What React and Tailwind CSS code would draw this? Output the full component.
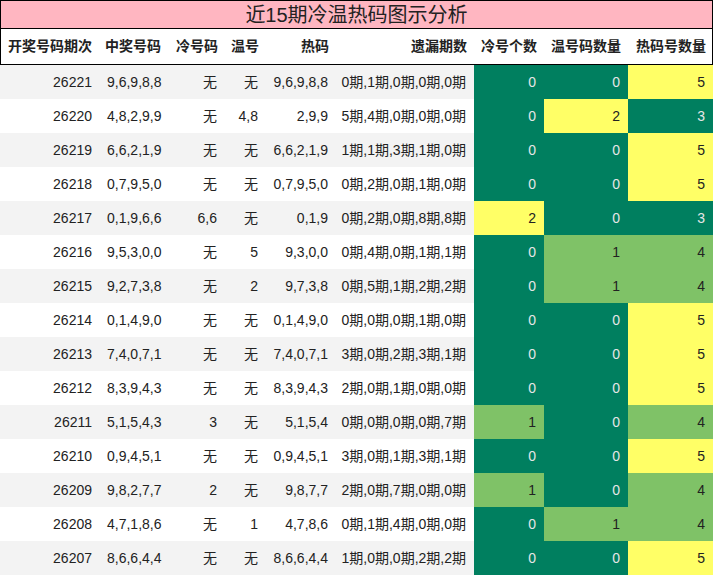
const rows = [
  ["26221", "9,6,9,8,8", "无", "无", "9,6,9,8,8", "0期,1期,0期,0期,0期", 0, 0, 5],
  ["26220", "4,8,2,9,9", "无", "4,8", "2,9,9", "5期,4期,0期,0期,0期", 0, 2, 3],
  ["26219", "6,6,2,1,9", "无", "无", "6,6,2,1,9", "1期,1期,3期,1期,0期", 0, 0, 5],
  ["26218", "0,7,9,5,0", "无", "无", "0,7,9,5,0", "0期,2期,0期,1期,0期", 0, 0, 5],
  ["26217", "0,1,9,6,6", "6,6", "无", "0,1,9", "0期,2期,0期,8期,8期", 2, 0, 3],
  ["26216", "9,5,3,0,0", "无", "5", "9,3,0,0", "0期,4期,0期,1期,1期", 0, 1, 4],
  ["26215", "9,2,7,3,8", "无", "2", "9,7,3,8", "0期,5期,1期,2期,2期", 0, 1, 4],
  ["26214", "0,1,4,9,0", "无", "无", "0,1,4,9,0", "0期,0期,0期,1期,0期", 0, 0, 5],
  ["26213", "7,4,0,7,1", "无", "无", "7,4,0,7,1", "3期,0期,2期,3期,1期", 0, 0, 5],
  ["26212", "8,3,9,4,3", "无", "无", "8,3,9,4,3", "2期,0期,1期,0期,0期", 0, 0, 5],
  ["26211", "5,1,5,4,3", "3", "无", "5,1,5,4", "0期,0期,0期,0期,7期", 1, 0, 4],
  ["26210", "0,9,4,5,1", "无", "无", "0,9,4,5,1", "3期,0期,1期,3期,1期", 0, 0, 5],
  ["26209", "9,8,2,7,7", "2", "无", "9,8,7,7", "2期,0期,7期,0期,0期", 1, 0, 4],
  ["26208", "4,7,1,8,6", "无", "1", "4,7,8,6", "0期,1期,4期,0期,0期", 0, 1, 4],
  ["26207", "8,6,6,4,4", "无", "无", "8,6,6,4,4", "1期,0期,0期,2期,2期", 0, 0, 5],
];

const headers = ["开奖号码期次", "中奖号码", "冷号码", "温号", "热码", "遗漏期数", "冷号个数", "温号码数量", "热码号数量"];

const cols = "grid grid-cols-[100px_68px_57px_41px_70px_138px_70px_84px_85px]";

// level: 0 dark green, 1 light green, 2 yellow
const tone = [
  "bg-[#007f5f] text-[#e6e6e6]",
  "bg-[#7fc267] text-[#222]",
  "bg-[#ffff66] text-[#222]",
];

const countCell = (level, value, key) => (
  <div key={key} className={`h-[34px] flex items-center justify-end pr-2 ${tone[level]}`}>
    {value}
  </div>
);

export default function App() {
  return (
    <div className="w-[713px] h-[576px] bg-white text-[#222] overflow-hidden" style={{ fontFamily: '"Liberation Sans", "Noto Sans CJK SC", sans-serif' }}>
      <div className="h-[29px] bg-[#ffb6c1] border border-black flex items-center justify-center text-[20px] text-[#222]">
        近15期冷温热码图示分析
      </div>
      <div className={`${cols} h-[36px] border-x border-b border-black text-[14px] font-bold`}>
        {headers.map((h, i) => (
          <div key={i} className={`flex items-center ${i === 0 ? "pl-[7px]" : "justify-end pr-2"}`}>
            {h}
          </div>
        ))}
      </div>
      {rows.map((r, i) => {
        const cold = r[6];
        const warm = r[7];
        const hot = r[8];
        return (
          <div key={r[0]} className={`${cols} text-[14px] ${i % 2 === 0 ? "bg-[#f3f3f3]" : "bg-white"}`}>
            {r.slice(0, 6).map((v, j) => (
              <div key={j} className={`h-[34px] flex items-center ${j === 1 ? "pl-[7px]" : "justify-end pr-2"}`}>
                {v}
              </div>
            ))}
            {countCell(cold, cold, "c")}
            {countCell(warm, warm, "w")}
            {countCell(hot - 3, hot, "h")}
          </div>
        );
      })}
    </div>
  );
}
